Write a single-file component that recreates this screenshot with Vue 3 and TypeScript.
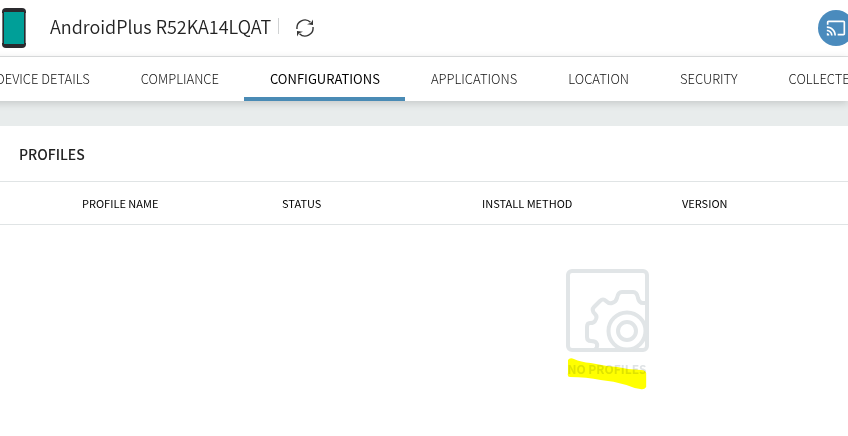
<script setup lang="ts">
import { ref } from 'vue'

const deviceName = 'AndroidPlus R52KA14LQAT'
const tabs: string[] = [
  'DEVICE DETAILS',
  'COMPLIANCE',
  'CONFIGURATIONS',
  'APPLICATIONS',
  'LOCATION',
  'SECURITY',
  'COLLECTED',
]
const activeTab = ref('CONFIGURATIONS')
const columns: string[] = ['PROFILE NAME', 'STATUS', 'INSTALL METHOD', 'VERSION']
</script>

<template>
  <div class="page">
    <header class="device-bar">
      <svg class="phone" viewBox="0 0 24 40" aria-hidden="true">
        <rect width="24" height="40" rx="4" fill="#2b2a2e" />
        <rect x="2" y="4" width="20" height="32" fill="#009f98" />
        <path d="M.5 5V35M23.500 5V35" stroke="#77777b" />
      </svg>
      <div class="device-heading">
        <h1 class="device-name">{{ deviceName }}</h1>
        <button class="refresh" type="button" aria-label="Refresh">
          <svg viewBox="0 0 20 20" aria-hidden="true">
            <g fill="none" stroke="#333" stroke-width="1.4">
              <path d="M2 11A8 8 0 0 1 15.500 4.300" />
              <path d="M18 9A8 8 0 0 1 4.500 15.700" />
            </g>
            <path d="M18 1.500V7L12 6.200L16 4.800Z" fill="#333" />
            <path d="M2 18.500V13L8 13.800L4 15.200Z" fill="#333" />
          </svg>
        </button>
      </div>
      <button class="cast" type="button" aria-label="Cast screen">
        <svg viewBox="0 0 24 24" aria-hidden="true">
          <path
            fill="#fff"
            d="M21 3H3c-1.100 0-2 .9-2 2v3h2V5h18v14h-7v2h7c1.100 0 2-.9 2-2V5c0-1.100-.9-2-2-2zM1 18v3h3c0-1.660-1.340-3-3-3zm0-4v2c2.760 0 5 2.240 5 5h2c0-3.870-3.130-7-7-7zm0-4v2c4.970 0 9 4.030 9 9h2c0-6.080-4.930-11-11-11z"
          />
        </svg>
      </button>
    </header>

    <nav class="tabs">
      <a
        v-for="tab in tabs"
        :key="tab"
        href="#"
        class="tab"
        :class="{ active: tab === activeTab }"
        @click.prevent="activeTab = tab"
        >{{ tab }}</a
      >
    </nav>

    <main class="panel">
      <h2 class="panel-title">PROFILES</h2>
      <table class="profiles">
        <colgroup>
          <col class="col-select" />
          <col v-for="name in columns" :key="name" class="col-data" />
        </colgroup>
        <thead>
          <tr>
            <td></td>
            <th v-for="name in columns" :key="name" scope="col">{{ name }}</th>
          </tr>
        </thead>
        <tbody>
          <tr>
            <td class="empty-cell" :colspan="columns.length + 1">
              <div class="empty">
                <svg class="empty-icon" viewBox="0 0 84 84" aria-hidden="true">
                  <g fill="none" stroke="#e1e5e7" stroke-width="4" stroke-linejoin="round">
                    <rect x="3" y="3" width="79" height="79" rx="4" />
                    <path
                      d="M82 35H78Q74 35 73 30Q72 24 68 24H57Q53 24 52 30Q51 34 47 35Q44 36 41 33Q38 30 35 33L29 39Q26 42 30 46Q33 49 30 53Q29 55 25 55Q22 55 22 59V69Q22 73 26 73Q31 73 32 76Q33 79 30 82"
                    />
                    <circle cx="62" cy="63" r="18.500" />
                    <circle cx="62" cy="63" r="9" />
                  </g>
                </svg>
                <p class="empty-label">
                  NO PROFILES
                  <svg class="marker" viewBox="0 0 80 34" preserveAspectRatio="none" aria-hidden="true">
                    <path
                      d="M1 3Q3 0 7 2Q14 5 24 6Q38 9 51 10Q63 13 75 13Q79 13 80 16V30Q78 33 74 32Q67 31 60 28Q47 24 34 23Q20 20 3 20Q0 20 1 16Z"
                      fill="#ff0"
                    />
                  </svg>
                </p>
              </div>
            </td>
          </tr>
        </tbody>
      </table>
    </main>
  </div>
</template>

<style>
body {
  margin: 0;
  background: #fff;
}
</style>

<style scoped>
.page {
  overflow: hidden;
  color: #222;
  font-family: 'Noto Sans CJK SC', 'Noto Sans', sans-serif;
}

button {
  display: grid;
  place-items: center;
  padding: 0;
  border: 0;
  background: none;
  cursor: pointer;
}

.device-bar {
  display: flex;
  align-items: center;
  height: 56px;
  padding-left: 2px;
  border-bottom: 1px solid #e0e2e3;
}

.phone {
  width: 24px;
  height: 40px;
}

.device-heading {
  display: flex;
  align-items: center;
  padding-bottom: 4px;
}

.device-name {
  margin: 0 7px 0 24px;
  font-size: 18px;
  font-weight: 350;
  line-height: 24px;
  white-space: nowrap;
}

.refresh {
  height: 16px;
  padding-left: 16px;
  border-left: 1px solid #d0d2d3;
}

.refresh svg {
  width: 20px;
  height: 20px;
}

.cast {
  flex: none;
  width: 36px;
  height: 36px;
  margin: 0 -6px 0 auto;
  border-radius: 50%;
  background: #4a8bbd;
}

.cast svg {
  width: 20px;
  height: 20px;
}

.tabs {
  position: relative;
  display: flex;
  margin-left: -30px;
  background: #fff;
  box-shadow: 0 2px 8px rgba(0, 0, 0, 0.16);
}

.tab {
  flex: none;
  padding: 12px 25px 8px 26px;
  border-bottom: 4px solid transparent;
  color: #111;
  font-size: 13px;
  font-weight: 300;
  line-height: 20px;
  text-decoration: none;
}

.tab.active {
  border-color: #4a8bb5;
  color: #000;
  font-weight: 400;
}

.panel {
  border-top: 25px solid #e8ecec;
}

.panel-title {
  margin: 0;
  padding: 16px 19px 15px;
  border-bottom: 1px solid #e0e4e5;
  font-size: 14px;
  font-weight: 500;
  line-height: 24px;
}

.profiles {
  width: 100%;
  border-spacing: 0;
  table-layout: fixed;
}

.col-select {
  width: 65px;
}

.col-data {
  width: 200px;
}

.col-data:last-child {
  width: auto;
}

.profiles thead td,
.profiles th {
  height: 42px;
  padding: 0 0 0 17px;
  border-bottom: 1px solid #e0e4e5;
  color: #000;
  font-size: 11px;
  font-weight: 400;
  line-height: 16px;
  text-align: left;
}

.empty-cell {
  padding: 43px 0 40px 366px;
}

.empty {
  display: flex;
  flex-direction: column;
  align-items: center;
}

.empty-icon {
  width: 84px;
  height: 84px;
}

.empty-label {
  position: relative;
  margin: 7px 0 0;
  color: #dfe3e5;
  font-size: 12px;
  font-weight: 700;
  line-height: 20px;
}

.marker {
  position: absolute;
  top: -2px;
  left: 0;
  width: 100%;
  height: 34px;
  mix-blend-mode: multiply;
}
</style>
